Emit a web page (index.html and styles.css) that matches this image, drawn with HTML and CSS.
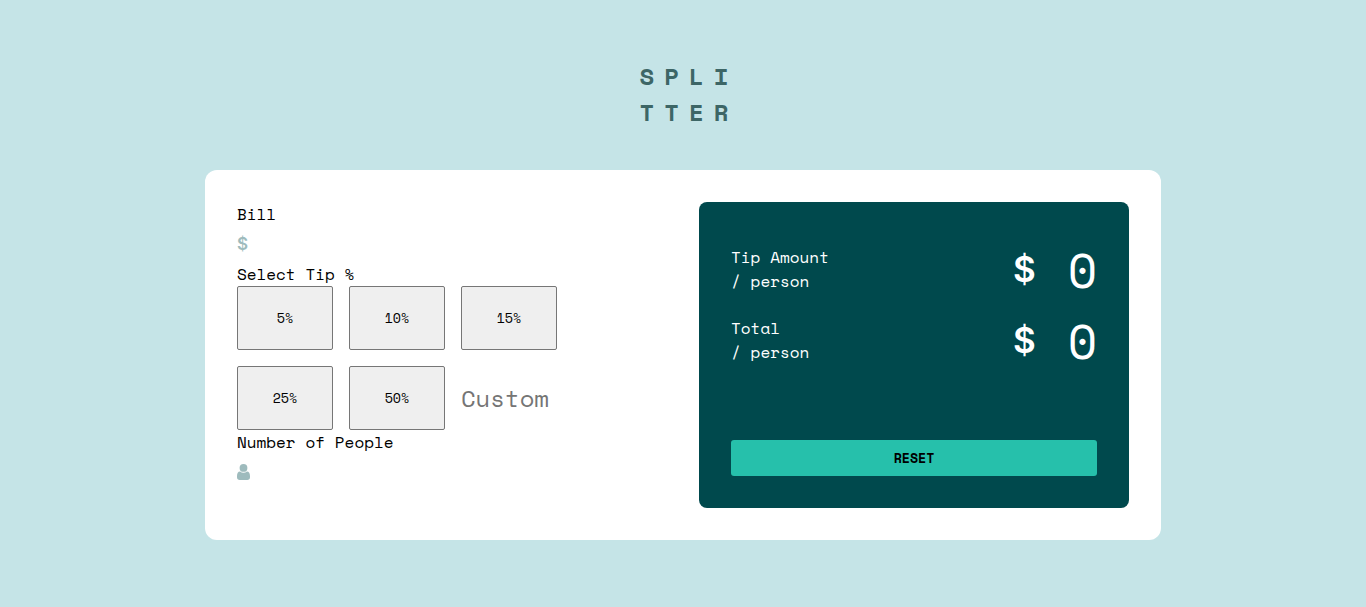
FILE: index.html
```html
<!DOCTYPE html>
<html lang="en">
<head>
  <meta charset="utf-8">
  <meta name="viewport" content="width=device-width, initial-scale=1">
  <title>Splitter</title>
  <link rel="stylesheet" href="styles.css">
</head>
<body>
  <h1 class="logo">SPLI<br>TTER</h1>
  <main class="card">
    <form class="form" id="tip-form">
      <label class="label" for="bill">Bill</label>
      <div class="field">
        <span class="field-sign">$</span>
        <input class="field-input" id="bill" type="text" inputmode="decimal">
      </div>
      <p class="label" id="tip-label">Select Tip %</p>
      <div class="tips" role="group" aria-labelledby="tip-label">
        <button class="tip" type="button">5%</button>
        <button class="tip" type="button">10%</button>
        <button class="tip" type="button">15%</button>
        <button class="tip" type="button">25%</button>
        <button class="tip" type="button">50%</button>
        <input class="tip-custom" type="text" inputmode="decimal" placeholder="Custom" aria-label="Custom tip">
      </div>
      <label class="label" for="people">Number of People</label>
      <div class="field">
        <svg class="field-icon" viewBox="0 0 13 16" aria-hidden="true">
          <circle cx="6.500" cy="3.900" r="3.900"/>
          <path d="M3.100 7.500C1 7.500 0 9.500 0 12.200v1.100C0 15 1.100 16 2.700 16h7.600c1.600 0 2.700-1 2.700-2.700v-1.100c0-2.700-1-4.700-3.100-4.700C9 8.300 7.900 8.700 6.500 8.700S4 8.300 3.100 7.500z"/>
        </svg>
        <input class="field-input" id="people" type="text" inputmode="numeric">
      </div>
    </form>
    <section class="panel">
      <div class="result">
        <p class="result-label">Tip Amount<br>/ person</p>
        <p class="amount"><span class="amount-sign">$</span><output form="tip-form">0</output></p>
      </div>
      <div class="result">
        <p class="result-label">Total<br>/ person</p>
        <p class="amount"><span class="amount-sign">$</span><output form="tip-form">0</output></p>
      </div>
      <button class="reset" type="reset" form="tip-form">RESET</button>
    </section>
  </main>
</body>
</html>
```

FILE: styles.css
```css
* {
  box-sizing: border-box;
  margin: 0;
}

body {
  display: flex;
  flex-direction: column;
  align-items: center;
  gap: 40px;
  min-height: 100vh;
  padding: 58px 0 48px;
  background: #c5e4e7;
  color: #000;
  font-family: "Space Mono", "Liberation Mono", monospace;
  font-size: 16px;
  line-height: 24px;
}

button,
input {
  font-family: inherit;
}

.logo {
  padding-left: 12px;
  color: #3d6666;
  font-size: 24px;
  font-weight: 700;
  letter-spacing: 10px;
  line-height: 36px;
}

.card {
  display: grid;
  grid-template-columns: 1fr 1fr;
  gap: 32px;
  width: 70%;
  padding: 32px;
  border-radius: 12px;
  background: #fff;
}

.label {
  display: block;
}

.field {
  display: flex;
  align-items: center;
  height: 36px;
}

.field-sign {
  color: #9ebbbd;
  font-family: Inter, sans-serif;
  font-size: 17px;
  font-weight: 600;
}

.field-icon {
  flex: none;
  width: 13px;
  height: 16px;
  fill: #9ebbbd;
}

.field-input {
  flex: 1;
  min-width: 0;
  padding: 0;
  border: 0;
  outline: 0;
  background: transparent;
  font-size: 24px;
  text-align: right;
}

.tips {
  display: grid;
  grid-template-columns: repeat(3, 96px);
  grid-auto-rows: 64px;
  gap: 16px;
}

.tip {
  border: 1px solid #767676;
  border-radius: 2px;
  background: #efefef;
  color: #000;
}

.tip-custom {
  width: 100%;
  padding: 0;
  border: 0;
  outline: 0;
  background: transparent;
  font-size: 24px;
}

.tip-custom::placeholder {
  color: #757575;
}

.panel {
  display: flex;
  flex-direction: column;
  padding: 32px;
  border-radius: 8px;
  background: #00494d;
  color: #fff;
}

.result {
  display: flex;
  align-items: center;
  justify-content: space-between;
  height: 71px;
}

.result-label {
  padding-bottom: 1px;
}

.amount {
  display: flex;
  align-items: center;
  gap: 32px;
  font-size: 48px;
  line-height: 71px;
}

.amount-sign {
  font-family: Inter, sans-serif;
  font-size: 35px;
  font-weight: 600;
}

.reset {
  height: 36px;
  margin-top: 64px;
  border: 0;
  border-radius: 3px;
  background: #26c0ab;
  color: #000;
  font-weight: 700;
}
```
